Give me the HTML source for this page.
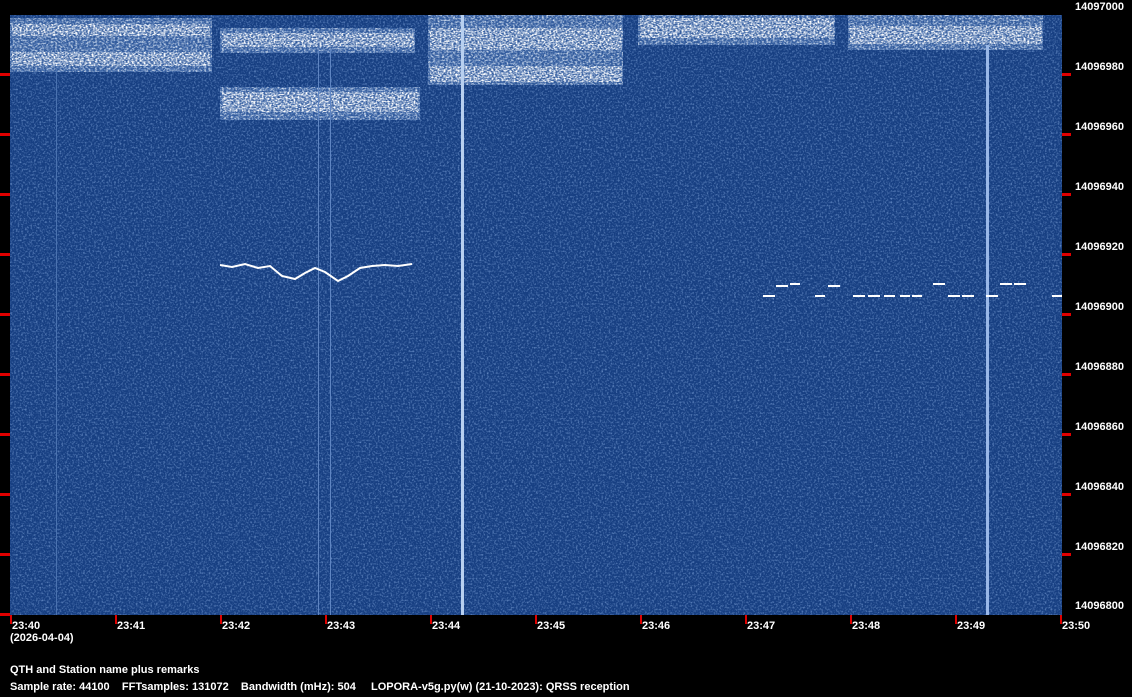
<!DOCTYPE html>
<html><head><style>
html,body{margin:0;padding:0;background:#000;width:1132px;height:697px;overflow:hidden;position:relative;font-family:"Liberation Sans",sans-serif;font-weight:bold;font-size:11px;color:#fff}
.t{position:absolute;white-space:nowrap;line-height:12px}
.r{position:absolute;background:#e00000}
</style></head><body>
<svg width="1132" height="697" style="position:absolute;left:0;top:0">
<defs>
<filter id="n" x="0" y="0" width="100%" height="100%">
<feTurbulence type="fractalNoise" baseFrequency="0.55" numOctaves="2" seed="3"/>
<feColorMatrix type="matrix" values="0 0 0 0 0.35  0 0 0 0 0.55  0 0 0 0 0.92  0 0 0 1.3 -0.6"/>
</filter>
<filter id="w" x="0" y="0" width="100%" height="100%">
<feTurbulence type="fractalNoise" baseFrequency="0.45 0.6" numOctaves="2" seed="7"/>
<feColorMatrix type="matrix" values="0 0 0 0 0.85  0 0 0 0 0.92  0 0 0 0 1  0 0 0 2.2 -0.95"/>
</filter>
<filter id="s" x="0" y="0" width="100%" height="100%">
<feTurbulence type="fractalNoise" baseFrequency="0.5 0.7" numOctaves="1" seed="11"/>
<feColorMatrix type="matrix" values="0 0 0 0 1  0 0 0 0 1  0 0 0 0 1  0 0 0 3.5 -1.5"/>
</filter>
</defs>
<rect x="10" y="15" width="1052" height="600" fill="#173f82"/>
<rect x="10" y="15" width="1052" height="600" filter="url(#n)"/>
<g fill="#6a95d5" opacity="0.3">
<rect x="10" y="18" width="202" height="54"/>
<rect x="220" y="28" width="195" height="25"/>
<rect x="220" y="87" width="200" height="33"/>
<rect x="428" y="15" width="195" height="70"/>
<rect x="638" y="15" width="197" height="30"/>
<rect x="848" y="15" width="195" height="35"/>
</g>
<rect x="10" y="18" width="202" height="54" filter="url(#w)"/>
<rect x="220" y="28" width="195" height="25" filter="url(#w)"/>
<rect x="220" y="87" width="200" height="33" filter="url(#w)"/>
<rect x="428" y="15" width="195" height="70" filter="url(#w)"/>
<rect x="638" y="15" width="197" height="30" filter="url(#w)"/>
<rect x="848" y="15" width="195" height="35" filter="url(#w)"/>
<rect x="12" y="24" width="198" height="12" filter="url(#s)"/>
<rect x="12" y="52" width="198" height="14" filter="url(#s)"/>
<rect x="222" y="33" width="192" height="14" filter="url(#s)"/>
<rect x="222" y="92" width="196" height="20" filter="url(#s)"/>
<rect x="430" y="28" width="192" height="22" filter="url(#s)"/>
<rect x="430" y="66" width="192" height="16" filter="url(#s)"/>
<rect x="640" y="18" width="194" height="20" filter="url(#s)"/>
<rect x="850" y="26" width="192" height="18" filter="url(#s)"/>
<rect x="461" y="15" width="3" height="600" fill="#b8d0f0"/>
<rect x="986" y="45" width="3" height="570" fill="#9ab8e8"/>
<rect x="318" y="50" width="1" height="565" fill="#5f85c2"/>
<rect x="330" y="50" width="1" height="565" fill="#5f85c2"/>
<rect x="56" y="70" width="1" height="545" fill="#4a72b0"/>
<polyline fill="none" stroke="#fff" stroke-width="2" points="220,265 232,267 245,264 258,268 270,266 282,276 295,279 305,273 315,268 325,272 338,281 348,276 360,268 372,266 385,265 398,266 412,264"/>
<g stroke="#fff" stroke-width="2">
<line x1="763" y1="296" x2="775" y2="296"/><line x1="776" y1="286" x2="788" y2="286"/><line x1="790" y1="284" x2="800" y2="284"/>
<line x1="815" y1="296" x2="825" y2="296"/><line x1="828" y1="286" x2="840" y2="286"/>
<line x1="853" y1="296" x2="865" y2="296"/><line x1="868" y1="296" x2="880" y2="296"/><line x1="884" y1="296" x2="895" y2="296"/><line x1="900" y1="296" x2="910" y2="296"/><line x1="912" y1="296" x2="922" y2="296"/>
<line x1="933" y1="284" x2="945" y2="284"/><line x1="948" y1="296" x2="960" y2="296"/><line x1="962" y1="296" x2="974" y2="296"/><line x1="986" y1="296" x2="998" y2="296"/><line x1="1000" y1="284" x2="1012" y2="284"/><line x1="1014" y1="284" x2="1026" y2="284"/><line x1="1052" y1="296" x2="1062" y2="296"/>
</g>
</svg>
<div class="r" style="left:0;top:73px;width:10px;height:3px"></div>
<div class="r" style="left:0;top:133px;width:10px;height:3px"></div>
<div class="r" style="left:0;top:193px;width:10px;height:3px"></div>
<div class="r" style="left:0;top:253px;width:10px;height:3px"></div>
<div class="r" style="left:0;top:313px;width:10px;height:3px"></div>
<div class="r" style="left:0;top:373px;width:10px;height:3px"></div>
<div class="r" style="left:0;top:433px;width:10px;height:3px"></div>
<div class="r" style="left:0;top:493px;width:10px;height:3px"></div>
<div class="r" style="left:0;top:553px;width:10px;height:3px"></div>
<div class="r" style="left:0;top:613px;width:10px;height:3px"></div>
<div class="r" style="left:1062px;top:73px;width:9px;height:3px"></div>
<div class="r" style="left:1062px;top:133px;width:9px;height:3px"></div>
<div class="r" style="left:1062px;top:193px;width:9px;height:3px"></div>
<div class="r" style="left:1062px;top:253px;width:9px;height:3px"></div>
<div class="r" style="left:1062px;top:313px;width:9px;height:3px"></div>
<div class="r" style="left:1062px;top:373px;width:9px;height:3px"></div>
<div class="r" style="left:1062px;top:433px;width:9px;height:3px"></div>
<div class="r" style="left:1062px;top:493px;width:9px;height:3px"></div>
<div class="r" style="left:1062px;top:553px;width:9px;height:3px"></div>
<div class="r" style="left:10px;top:615px;width:2px;height:9px"></div>
<div class="r" style="left:115px;top:615px;width:2px;height:9px"></div>
<div class="r" style="left:220px;top:615px;width:2px;height:9px"></div>
<div class="r" style="left:325px;top:615px;width:2px;height:9px"></div>
<div class="r" style="left:430px;top:615px;width:2px;height:9px"></div>
<div class="r" style="left:535px;top:615px;width:2px;height:9px"></div>
<div class="r" style="left:640px;top:615px;width:2px;height:9px"></div>
<div class="r" style="left:745px;top:615px;width:2px;height:9px"></div>
<div class="r" style="left:850px;top:615px;width:2px;height:9px"></div>
<div class="r" style="left:955px;top:615px;width:2px;height:9px"></div>
<div class="r" style="left:1060px;top:615px;width:2px;height:9px"></div>
<div class="t" style="left:1075px;top:1px">14097000</div>
<div class="t" style="left:1075px;top:61px">14096980</div>
<div class="t" style="left:1075px;top:121px">14096960</div>
<div class="t" style="left:1075px;top:181px">14096940</div>
<div class="t" style="left:1075px;top:241px">14096920</div>
<div class="t" style="left:1075px;top:301px">14096900</div>
<div class="t" style="left:1075px;top:361px">14096880</div>
<div class="t" style="left:1075px;top:421px">14096860</div>
<div class="t" style="left:1075px;top:481px">14096840</div>
<div class="t" style="left:1075px;top:541px">14096820</div>
<div class="t" style="left:1075px;top:600px">14096800</div>
<div class="t" style="left:12px;top:620px">23:40</div>
<div class="t" style="left:117px;top:620px">23:41</div>
<div class="t" style="left:222px;top:620px">23:42</div>
<div class="t" style="left:327px;top:620px">23:43</div>
<div class="t" style="left:432px;top:620px">23:44</div>
<div class="t" style="left:537px;top:620px">23:45</div>
<div class="t" style="left:642px;top:620px">23:46</div>
<div class="t" style="left:747px;top:620px">23:47</div>
<div class="t" style="left:852px;top:620px">23:48</div>
<div class="t" style="left:957px;top:620px">23:49</div>
<div class="t" style="left:1062px;top:620px">23:50</div>
<div class="t" style="left:10px;top:632px">(2026-04-04)</div>
<div class="t" style="left:10px;top:664px">QTH and Station name plus remarks</div>
<div class="t" style="left:10px;top:681px">Sample rate: 44100&nbsp;&nbsp;&nbsp;&nbsp;FFTsamples: 131072&nbsp;&nbsp;&nbsp;&nbsp;Bandwidth (mHz): 504</div>
<div class="t" style="left:371px;top:681px">LOPORA-v5g.py(w) (21-10-2023): QRSS reception</div>
</body></html>
